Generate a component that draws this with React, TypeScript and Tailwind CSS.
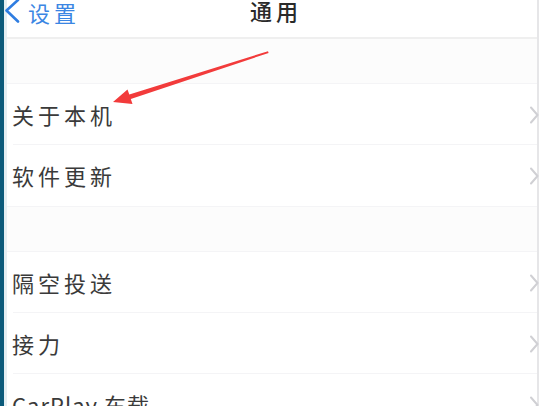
import React from "react";

const font = { fontFamily: '"Noto Sans CJK SC", "Noto Sans", sans-serif' };

function Chevron() {
  return (
    <svg width="9" height="18" viewBox="0 0 9 18" className="shrink-0">
      <path d="M1 1.5 L7.5 9 L1 16.5" fill="none" stroke="#d0d0d4" strokeWidth="2" strokeLinecap="round" strokeLinejoin="round" />
    </svg>
  );
}

function Row({ label, last, latin }: { label: string; last?: boolean; latin?: boolean }) {
  return (
    <div className="h-[61px] shrink-0 flex items-center bg-white pl-[5px] relative">
      <div className="flex-1 flex items-center justify-between h-full">
        <span className={latin ? "text-[22px] tracking-[1px] text-[#3a3a3a]" : "text-[22px] tracking-[4px] text-[#3a3a3a]"}>{label}</span>
        <div className="-mr-[2px]">
          <Chevron />
        </div>
      </div>
      {!last && <div className="absolute left-[6px] right-0 bottom-0 h-px bg-[#f4f4f6]" />}
    </div>
  );
}

export default function App() {
  return (
    <div className="w-[539px] h-[406px] overflow-hidden flex bg-white relative" style={font}>
      {/* left device edge */}
      <div className="w-[4px] bg-[#0b5a7a] shrink-0" />
      <div className="w-[3px] bg-[#e4eef2] shrink-0" />

      <div className="flex-1 flex flex-col">
        {/* nav bar */}
        <div className="h-[39px] shrink-0 bg-white border-b-2 border-[#efefef] relative flex items-start">
          <div className="flex items-start -ml-[4px]">
            <svg width="18" height="26" viewBox="0 0 18 26" className="-mt-[1px]">
              <path d="M15 1 L3.5 11.5 L15 22.5" fill="none" stroke="#2f7de1" strokeWidth="2.6" strokeLinecap="round" strokeLinejoin="round" />
            </svg>
            <span className="ml-[7px] text-[22px] leading-[24px] tracking-[4px] text-[#3b86e3]">设置</span>
          </div>
          <div className="absolute left-0 right-0 -top-[2px] flex justify-center">
            <span className="text-[22px] leading-[24px] tracking-[4px] font-medium text-[#2a2a2a] pl-[8px]">通用</span>
          </div>
        </div>

        {/* spacer */}
        <div className="h-[45px] shrink-0 bg-[#fcfcfc] border-b border-[#f4f4f6]" />

        <Row label="关于本机" />
        <Row label="软件更新" last />

        <div className="h-[46px] shrink-0 bg-[#fcfcfc] border-y border-[#f4f4f6]" />

        <Row label="隔空投送" />
        <Row label="接力" />
        <Row label="CarPlay 车载" last latin />
      </div>

      {/* right edge */}
      <div className="w-[2px] bg-[#e6e6e8] shrink-0" />

      {/* red annotation arrow */}
      <svg className="absolute left-0 top-0 pointer-events-none" width="539" height="406" viewBox="0 0 539 406">
        <polygon points="268,51.2 268.6,53 130.8,99 132.5,104 113,102 127.5,89.6 129.3,94.5" fill="#f23b3b" />
      </svg>
    </div>
  );
}
